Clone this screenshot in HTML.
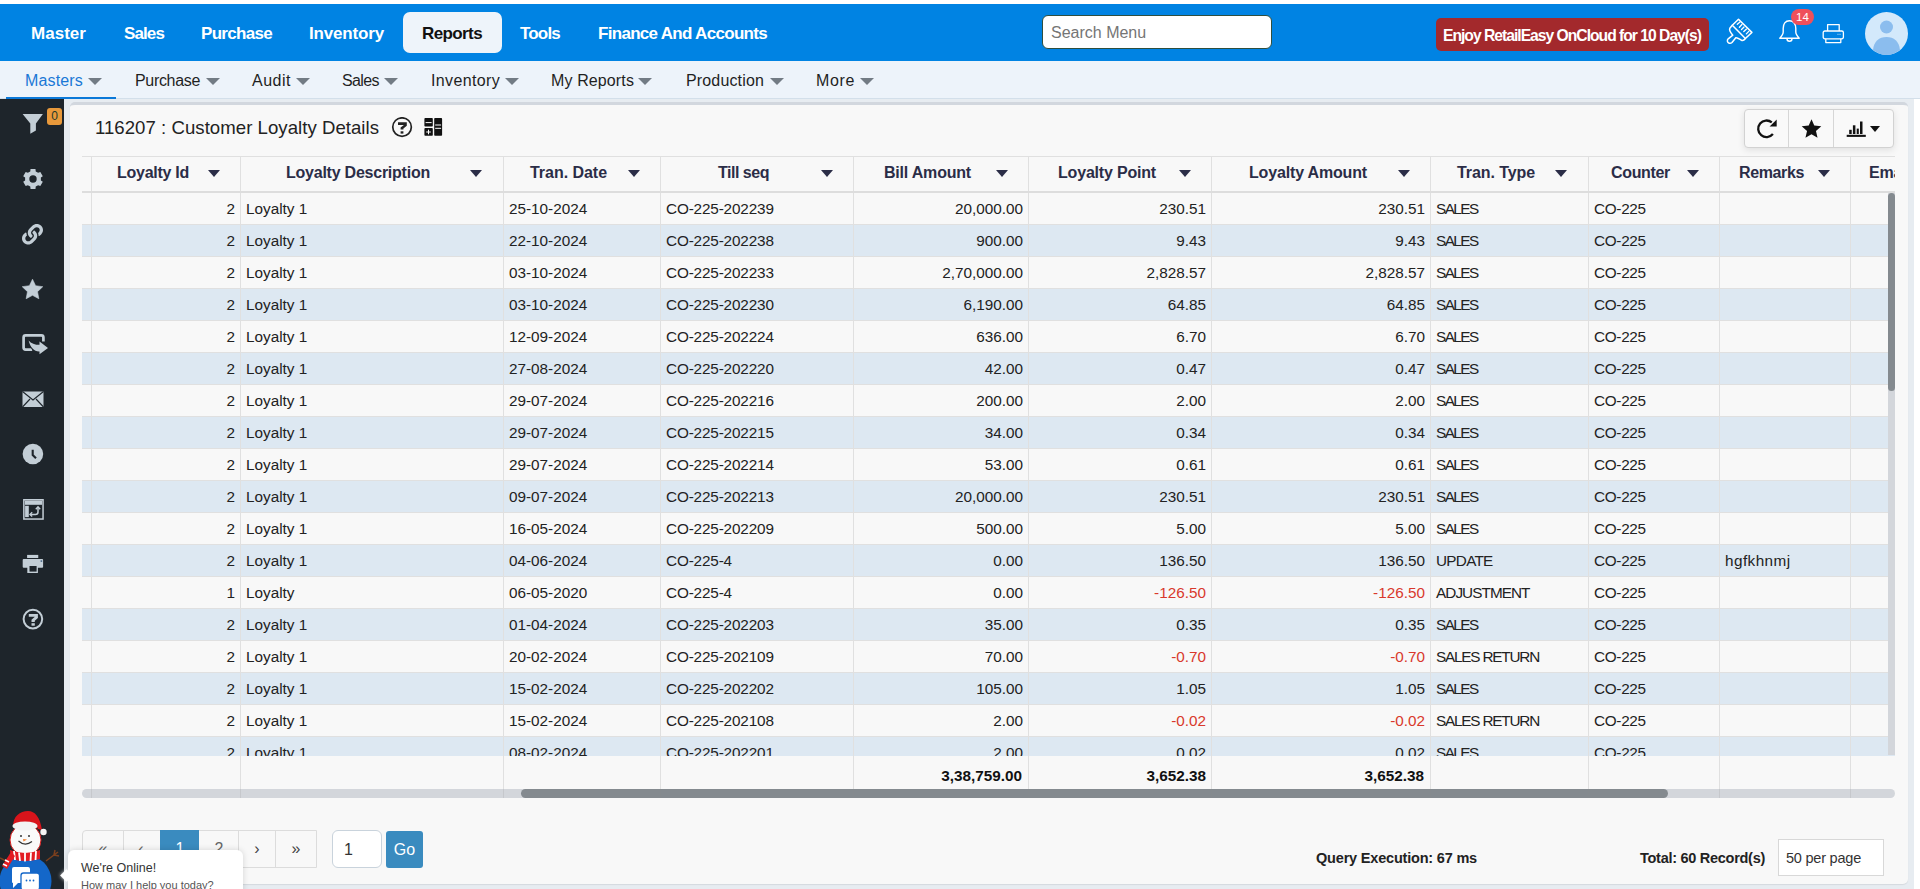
<!DOCTYPE html><html><head><meta charset="utf-8"><style>
*{box-sizing:border-box;margin:0;padding:0}
html,body{width:1920px;height:889px;overflow:hidden;background:#fff;font-family:"Liberation Sans", sans-serif;}
.abs{position:absolute}
.tn{position:absolute;top:1px;height:57px;line-height:57px;color:#fff;font-weight:bold;font-size:17px;white-space:nowrap}
.sn{position:absolute;top:0;height:37px;line-height:39px;color:#1f1f1f;font-size:16px;white-space:nowrap}
.hd{position:absolute;top:0;height:35px;line-height:34px;font-weight:bold;font-size:16px;color:#2b2d47;white-space:nowrap}
.c{position:absolute;top:0;height:32px;line-height:31px;font-size:15.3px;color:#222;white-space:nowrap}
.neg{color:#d9382c}
</style></head><body>

<div class="abs" style="left:0;top:4px;width:1920px;height:57px;background:#0083e3">
<div class="abs" style="left:403px;top:8px;width:99px;height:41px;background:#eef4fa;border-radius:7px"></div>
<div class="tn" style="letter-spacing:0.031px;left:31px;color:#fff">Master</div>
<div class="tn" style="letter-spacing:-0.887px;left:124px;color:#fff">Sales</div>
<div class="tn" style="letter-spacing:-0.693px;left:201px;color:#fff">Purchase</div>
<div class="tn" style="letter-spacing:-0.170px;left:309px;color:#fff">Inventory</div>
<div class="tn" style="letter-spacing:-0.605px;left:422px;color:#111">Reports</div>
<div class="tn" style="letter-spacing:-0.816px;left:520px;color:#fff">Tools</div>
<div class="tn" style="letter-spacing:-0.697px;left:598px;color:#fff">Finance And Accounts</div>
<div class="abs" style="left:1042px;top:11px;width:230px;height:34px;background:#fff;border:1px solid #2f4f3f;border-radius:6px;font-size:16px;color:#757575;line-height:34px;padding-left:8px">Search Menu</div>
<div class="abs" style="left:1436px;top:14px;width:273px;height:33px;background:#a3292c;border-radius:5px"></div>
<div class="tn" style="letter-spacing:-1.011px;left:1443px;top:14px;height:33px;line-height:35px;font-size:15.7px">Enjoy RetailEasy OnCloud for 10 Day(s)</div>
<svg class="abs" style="left:1722px;top:10px" width="36" height="34" viewBox="0 0 36 34" fill="none" stroke="#fff" stroke-width="1.5" stroke-linejoin="round" stroke-linecap="round">
<path d="M16.5 5.2 L29.9 18.4 L23.4 24.5 L10.3 11.3 Z"/>
<path d="M10.3 11.3 L7.8 14.3 C7.2 15.5 8.5 18.5 10.8 21.2 L6.2 24.8 C4.8 26.2 5.2 28.6 7.2 29.2 C8.2 29.5 9.2 29.2 10 28.5 L13.8 23.7 C15.5 23.2 18 25.5 20 26.5 C21.5 26.8 22.6 25.6 23.4 24.5"/>
<path d="M15.3 10.3 L18 8 M17.4 13.2 L19.9 10.5 M19.5 15.5 L22 13 M21.8 17.6 L24.5 15.1 M24.3 19.9 L26.8 17.4" stroke-width="1.3"/></svg>
<svg class="abs" style="left:1778px;top:15px" width="24" height="26" viewBox="0 0 24 26" fill="none" stroke="#fff" stroke-width="1.4" stroke-linejoin="round">
<path d="M11.5 1.8 C7.3 1.8 5.2 5 5.2 9.5 L5.2 13 C5.2 15 4.4 16.3 1.8 19.3 L21.2 19.3 C18.6 16.3 17.8 15 17.8 13 L17.8 9.5 C17.8 5 15.7 1.8 11.5 1.8 Z"/><path d="M9 19.8 a2.5 2.5 0 0 0 5 0"/></svg>
<div class="abs" style="left:1791px;top:5px;width:23px;height:16px;background:#ef505b;border-radius:8px;color:#fff;font-size:11.5px;line-height:17px;text-align:center">14</div>
<svg class="abs" style="left:1822px;top:18px" width="23" height="22" viewBox="0 0 23 22" fill="none" stroke="#fff" stroke-width="1.3" stroke-linejoin="round">
<path d="M5.6 9 V2.6 H17.2 V9"/><path d="M3.8 16.8 H2.8 a1.6 1.6 0 0 1 -1.6 -1.6 V10.6 a1.6 1.6 0 0 1 1.6 -1.6 H19.8 a1.6 1.6 0 0 1 1.6 1.6 V15.2 a1.6 1.6 0 0 1 -1.6 1.6 H18.8"/><rect x="3.8" y="16.8" width="15" height="3.8"/><path d="M15.6 12.3 H16.4 M17.6 12.3 H18.4" stroke-width="1"/></svg>
<svg class="abs" style="left:1865px;top:8px" width="43" height="43" viewBox="0 0 43 43"><circle cx="21.5" cy="21.5" r="21.5" fill="#d3e9fb"/><circle cx="21.5" cy="15" r="6.5" fill="#8bbdee"/><path d="M8 38 C9 29 14 25 21.5 25 C29 25 34 29 35 38 C31 41 26 43 21.5 43 C17 43 12 41 8 38 Z" fill="#8bbdee"/></svg>
</div>
<div class="abs" style="left:0;top:61px;width:1920px;height:38px;background:#edf3fa;border-bottom:1px solid #d3dfea">
<div class="sn" style="letter-spacing:0.156px;left:25px;color:#1a78d6">Masters</div>
<div style="position:absolute;left:88px;top:17px;width:0;height:0;border-left:7.0px solid transparent;border-right:7.0px solid transparent;border-top:7px solid #727b84"></div>
<div class="sn" style="letter-spacing:-0.324px;left:135px;color:#1f1f1f">Purchase</div>
<div style="position:absolute;left:206px;top:17px;width:0;height:0;border-left:7.0px solid transparent;border-right:7.0px solid transparent;border-top:7px solid #727b84"></div>
<div class="sn" style="letter-spacing:0.506px;left:252px;color:#1f1f1f">Audit</div>
<div style="position:absolute;left:296px;top:17px;width:0;height:0;border-left:7.0px solid transparent;border-right:7.0px solid transparent;border-top:7px solid #727b84"></div>
<div class="sn" style="letter-spacing:-0.606px;left:342px;color:#1f1f1f">Sales</div>
<div style="position:absolute;left:384px;top:17px;width:0;height:0;border-left:7.0px solid transparent;border-right:7.0px solid transparent;border-top:7px solid #727b84"></div>
<div class="sn" style="letter-spacing:0.354px;left:431px;color:#1f1f1f">Inventory</div>
<div style="position:absolute;left:505px;top:17px;width:0;height:0;border-left:7.0px solid transparent;border-right:7.0px solid transparent;border-top:7px solid #727b84"></div>
<div class="sn" style="letter-spacing:0.120px;left:551px;color:#1f1f1f">My Reports</div>
<div style="position:absolute;left:638px;top:17px;width:0;height:0;border-left:7.0px solid transparent;border-right:7.0px solid transparent;border-top:7px solid #727b84"></div>
<div class="sn" style="letter-spacing:0.150px;left:686px;color:#1f1f1f">Production</div>
<div style="position:absolute;left:770px;top:17px;width:0;height:0;border-left:7.0px solid transparent;border-right:7.0px solid transparent;border-top:7px solid #727b84"></div>
<div class="sn" style="letter-spacing:0.637px;left:816px;color:#1f1f1f">More</div>
<div style="position:absolute;left:860px;top:17px;width:0;height:0;border-left:7.0px solid transparent;border-right:7.0px solid transparent;border-top:7px solid #727b84"></div>
<div class="abs" style="left:6px;top:36px;width:110px;height:2px;background:#0a78d8"></div>
</div>
<div class="abs" style="left:0;top:99px;width:64px;height:790px;background:#1e252b"></div>
<div class="abs" style="left:64px;top:99px;width:1850px;height:790px;background:#e7ecf1"></div>
<div class="abs" style="left:1914px;top:99px;width:6px;height:790px;background:#fff"></div>
<div class="abs" style="left:70px;top:102px;width:1838px;height:782px;background:#f8f8f8;border-top:3px solid #d2d7de;border-radius:5px;box-shadow:0 1px 1px rgba(0,0,0,0.08)"></div>
<div class="abs" style="letter-spacing:0.035px;left:95px;top:113px;height:30px;line-height:30px;font-size:18.6px;color:#222;white-space:nowrap">116207 : Customer Loyalty Details</div>
<svg class="abs" style="left:391px;top:117px" width="22" height="21" viewBox="0 0 22 21"><circle cx="11.05" cy="10.1" r="9.3" fill="none" stroke="#222" stroke-width="1.7"/><path d="M7 5.2 H15.8 V8.8 L12.4 11.6 V12.6 H9.6 V10.6 L12.9 7.9 H7 Z" fill="#222"/><rect x="9.6" y="14.3" width="2.8" height="2.3" fill="#222"/></svg>
<svg class="abs" style="left:424px;top:118px" width="19" height="18" viewBox="0 0 19 18"><rect x="0.4" y="0.1" width="8.4" height="8.4" rx="0.8" fill="#111"/><rect x="0.4" y="10.1" width="8.4" height="7.7" rx="0.8" fill="#111"/><rect x="10.2" y="0.1" width="7.9" height="17.7" rx="0.8" fill="#111"/><path d="M1.6 4.6 H7.6 M11.2 7 H17.1 M11.2 10.3 H17.1 M2.2 14 H6.8 M4.5 11.7 V16.3" stroke="#fff" stroke-width="1"/></svg>
<div class="abs" style="left:1744px;top:109px;width:150px;height:39px;background:#f9f9f9;border:1.5px solid #d2d2d2;border-radius:4px;box-shadow:0 2px 7px rgba(0,0,0,0.10)"></div>
<div class="abs" style="left:1788px;top:110px;width:1px;height:37px;background:#d6d6d6"></div>
<div class="abs" style="left:1833px;top:110px;width:1px;height:37px;background:#d6d6d6"></div>
<svg class="abs" style="left:1756px;top:118px" width="22" height="22" viewBox="0 0 22 22"><path d="M16.9 16.1 A8.3 8.3 0 1 1 15.8 4.4" fill="none" stroke="#111" stroke-width="2.3"/><path d="M20.7 1.4 L20.7 8.5 L13.6 8.5 Z" fill="#111"/></svg>
<svg class="abs" style="left:1801px;top:119px" width="21" height="20" viewBox="0 0 21 21"><path d="M10.50 0.20 L13.40 6.90 L20.77 7.66 L15.20 12.64 L16.85 19.74 L10.50 15.90 L4.15 19.74 L5.80 12.64 L0.23 7.66 L7.60 6.90 Z" fill="#111"/></svg>
<svg class="abs" style="left:1846px;top:120px" width="20" height="18" viewBox="0 0 20 18"><rect x="0.7" y="14.8" width="19.1" height="2.1" fill="#111"/><rect x="3.2" y="9.8" width="2.5" height="4.2" fill="#111"/><rect x="6.9" y="5.3" width="2.5" height="8.7" fill="#111"/><rect x="10.7" y="8.6" width="2.1" height="5.4" fill="#111"/><rect x="14" y="1.5" width="2.5" height="12.5" fill="#111"/></svg>
<div style="position:absolute;left:1870px;top:126px;width:0;height:0;border-left:5.5px solid transparent;border-right:5.5px solid transparent;border-top:6px solid #111"></div>
<div class="abs" style="left:82px;top:156px;width:1813px;height:643px;overflow:hidden">
<div class="abs" style="left:0;top:0;width:2000px;height:37px;border-top:1px solid #e0e0e0;border-bottom:2px solid #dddddd"></div>
<div class="abs" style="left:9px;top:1px;width:1px;height:34px;background:#e0e0e0"></div>
<div class="hd" style="letter-spacing:-0.269px;left:35px">Loyalty Id</div>
<div style="position:absolute;left:126px;top:13.5px;width:0;height:0;border-left:6.0px solid transparent;border-right:6.0px solid transparent;border-top:7px solid #2b2d47"></div>
<div class="abs" style="left:158px;top:1px;width:1px;height:34px;background:#e0e0e0"></div>
<div class="hd" style="letter-spacing:-0.236px;left:204px">Loyalty Description</div>
<div style="position:absolute;left:388px;top:13.5px;width:0;height:0;border-left:6.0px solid transparent;border-right:6.0px solid transparent;border-top:7px solid #2b2d47"></div>
<div class="abs" style="left:421px;top:1px;width:1px;height:34px;background:#e0e0e0"></div>
<div class="hd" style="letter-spacing:-0.036px;left:448px">Tran. Date</div>
<div style="position:absolute;left:546px;top:13.5px;width:0;height:0;border-left:6.0px solid transparent;border-right:6.0px solid transparent;border-top:7px solid #2b2d47"></div>
<div class="abs" style="left:578px;top:1px;width:1px;height:34px;background:#e0e0e0"></div>
<div class="hd" style="letter-spacing:-0.480px;left:636px">Till seq</div>
<div style="position:absolute;left:739px;top:13.5px;width:0;height:0;border-left:6.0px solid transparent;border-right:6.0px solid transparent;border-top:7px solid #2b2d47"></div>
<div class="abs" style="left:771px;top:1px;width:1px;height:34px;background:#e0e0e0"></div>
<div class="hd" style="letter-spacing:-0.197px;left:802px">Bill Amount</div>
<div style="position:absolute;left:914px;top:13.5px;width:0;height:0;border-left:6.0px solid transparent;border-right:6.0px solid transparent;border-top:7px solid #2b2d47"></div>
<div class="abs" style="left:946px;top:1px;width:1px;height:34px;background:#e0e0e0"></div>
<div class="hd" style="letter-spacing:-0.189px;left:976px">Loyalty Point</div>
<div style="position:absolute;left:1097px;top:13.5px;width:0;height:0;border-left:6.0px solid transparent;border-right:6.0px solid transparent;border-top:7px solid #2b2d47"></div>
<div class="abs" style="left:1129px;top:1px;width:1px;height:34px;background:#e0e0e0"></div>
<div class="hd" style="letter-spacing:-0.164px;left:1167px">Loyalty Amount</div>
<div style="position:absolute;left:1316px;top:13.5px;width:0;height:0;border-left:6.0px solid transparent;border-right:6.0px solid transparent;border-top:7px solid #2b2d47"></div>
<div class="abs" style="left:1348px;top:1px;width:1px;height:34px;background:#e0e0e0"></div>
<div class="hd" style="letter-spacing:-0.084px;left:1375px">Tran. Type</div>
<div style="position:absolute;left:1473px;top:13.5px;width:0;height:0;border-left:6.0px solid transparent;border-right:6.0px solid transparent;border-top:7px solid #2b2d47"></div>
<div class="abs" style="left:1506px;top:1px;width:1px;height:34px;background:#e0e0e0"></div>
<div class="hd" style="letter-spacing:-0.333px;left:1529px">Counter</div>
<div style="position:absolute;left:1605px;top:13.5px;width:0;height:0;border-left:6.0px solid transparent;border-right:6.0px solid transparent;border-top:7px solid #2b2d47"></div>
<div class="abs" style="left:1637px;top:1px;width:1px;height:34px;background:#e0e0e0"></div>
<div class="hd" style="letter-spacing:-0.373px;left:1657px">Remarks</div>
<div style="position:absolute;left:1736px;top:13.5px;width:0;height:0;border-left:6.0px solid transparent;border-right:6.0px solid transparent;border-top:7px solid #2b2d47"></div>
<div class="abs" style="left:1768px;top:1px;width:1px;height:34px;background:#e0e0e0"></div>
<div class="hd" style="left:1787px;letter-spacing:-0.2px">Email</div>
<div style="position:absolute;left:1908px;top:13.5px;width:0;height:0;border-left:6.0px solid transparent;border-right:6.0px solid transparent;border-top:7px solid #2b2d47"></div>
<div class="abs" style="left:0;top:37px;width:1813px;height:563px;overflow:hidden">
<div class="abs" style="left:0;top:0px;width:1813px;height:32px;background:#f8f8f8;border-bottom:1px solid #e0e0e0">
</div>
<div class="abs" style="left:0;top:32px;width:1813px;height:32px;background:#dde8f2;border-bottom:1px solid #e0e0e0">
</div>
<div class="abs" style="left:0;top:64px;width:1813px;height:32px;background:#f8f8f8;border-bottom:1px solid #e0e0e0">
</div>
<div class="abs" style="left:0;top:96px;width:1813px;height:32px;background:#dde8f2;border-bottom:1px solid #e0e0e0">
</div>
<div class="abs" style="left:0;top:128px;width:1813px;height:32px;background:#f8f8f8;border-bottom:1px solid #e0e0e0">
</div>
<div class="abs" style="left:0;top:160px;width:1813px;height:32px;background:#dde8f2;border-bottom:1px solid #e0e0e0">
</div>
<div class="abs" style="left:0;top:192px;width:1813px;height:32px;background:#f8f8f8;border-bottom:1px solid #e0e0e0">
</div>
<div class="abs" style="left:0;top:224px;width:1813px;height:32px;background:#dde8f2;border-bottom:1px solid #e0e0e0">
</div>
<div class="abs" style="left:0;top:256px;width:1813px;height:32px;background:#f8f8f8;border-bottom:1px solid #e0e0e0">
</div>
<div class="abs" style="left:0;top:288px;width:1813px;height:32px;background:#dde8f2;border-bottom:1px solid #e0e0e0">
</div>
<div class="abs" style="left:0;top:320px;width:1813px;height:32px;background:#f8f8f8;border-bottom:1px solid #e0e0e0">
</div>
<div class="abs" style="left:0;top:352px;width:1813px;height:32px;background:#dde8f2;border-bottom:1px solid #e0e0e0">
</div>
<div class="abs" style="left:0;top:384px;width:1813px;height:32px;background:#f8f8f8;border-bottom:1px solid #e0e0e0">
</div>
<div class="abs" style="left:0;top:416px;width:1813px;height:32px;background:#dde8f2;border-bottom:1px solid #e0e0e0">
</div>
<div class="abs" style="left:0;top:448px;width:1813px;height:32px;background:#f8f8f8;border-bottom:1px solid #e0e0e0">
</div>
<div class="abs" style="left:0;top:480px;width:1813px;height:32px;background:#dde8f2;border-bottom:1px solid #e0e0e0">
</div>
<div class="abs" style="left:0;top:512px;width:1813px;height:32px;background:#f8f8f8;border-bottom:1px solid #e0e0e0">
</div>
<div class="abs" style="left:0;top:544px;width:1813px;height:32px;background:#dde8f2;border-bottom:1px solid #e0e0e0">
</div>
</div>
<div class="abs" style="left:9px;top:37px;width:1px;height:605px;background:#e0e0e0"></div>
<div class="abs" style="left:158px;top:37px;width:1px;height:605px;background:#e0e0e0"></div>
<div class="abs" style="left:421px;top:37px;width:1px;height:605px;background:#e0e0e0"></div>
<div class="abs" style="left:578px;top:37px;width:1px;height:605px;background:#e0e0e0"></div>
<div class="abs" style="left:771px;top:37px;width:1px;height:605px;background:#e0e0e0"></div>
<div class="abs" style="left:946px;top:37px;width:1px;height:605px;background:#e0e0e0"></div>
<div class="abs" style="left:1129px;top:37px;width:1px;height:605px;background:#e0e0e0"></div>
<div class="abs" style="left:1348px;top:37px;width:1px;height:605px;background:#e0e0e0"></div>
<div class="abs" style="left:1506px;top:37px;width:1px;height:605px;background:#e0e0e0"></div>
<div class="abs" style="left:1637px;top:37px;width:1px;height:605px;background:#e0e0e0"></div>
<div class="abs" style="left:1768px;top:37px;width:1px;height:605px;background:#e0e0e0"></div>
<div class="abs" style="left:0;top:37px;width:1813px;height:563px;overflow:hidden">
<div class="c" style="left:9px;top:0px;width:144px;text-align:right">2</div>
<div class="c" style="left:164px;top:0px">Loyalty 1</div>
<div class="c" style="left:427px;top:0px">25-10-2024</div>
<div class="c" style="left:584px;top:0px;letter-spacing:-0.15px">CO-225-202239</div>
<div class="c" style="left:771px;top:0px;width:170px;text-align:right">20,000.00</div>
<div class="c" style="left:946px;top:0px;width:178px;text-align:right">230.51</div>
<div class="c" style="left:1129px;top:0px;width:214px;text-align:right">230.51</div>
<div class="c" style="letter-spacing:-1.526px;left:1354px;top:0px">SALES</div>
<div class="c" style="left:1512px;top:0px;letter-spacing:-0.3px">CO-225</div>
<div class="c" style="left:9px;top:32px;width:144px;text-align:right">2</div>
<div class="c" style="left:164px;top:32px">Loyalty 1</div>
<div class="c" style="left:427px;top:32px">22-10-2024</div>
<div class="c" style="left:584px;top:32px;letter-spacing:-0.15px">CO-225-202238</div>
<div class="c" style="left:771px;top:32px;width:170px;text-align:right">900.00</div>
<div class="c" style="left:946px;top:32px;width:178px;text-align:right">9.43</div>
<div class="c" style="left:1129px;top:32px;width:214px;text-align:right">9.43</div>
<div class="c" style="letter-spacing:-1.526px;left:1354px;top:32px">SALES</div>
<div class="c" style="left:1512px;top:32px;letter-spacing:-0.3px">CO-225</div>
<div class="c" style="left:9px;top:64px;width:144px;text-align:right">2</div>
<div class="c" style="left:164px;top:64px">Loyalty 1</div>
<div class="c" style="left:427px;top:64px">03-10-2024</div>
<div class="c" style="left:584px;top:64px;letter-spacing:-0.15px">CO-225-202233</div>
<div class="c" style="left:771px;top:64px;width:170px;text-align:right">2,70,000.00</div>
<div class="c" style="left:946px;top:64px;width:178px;text-align:right">2,828.57</div>
<div class="c" style="left:1129px;top:64px;width:214px;text-align:right">2,828.57</div>
<div class="c" style="letter-spacing:-1.526px;left:1354px;top:64px">SALES</div>
<div class="c" style="left:1512px;top:64px;letter-spacing:-0.3px">CO-225</div>
<div class="c" style="left:9px;top:96px;width:144px;text-align:right">2</div>
<div class="c" style="left:164px;top:96px">Loyalty 1</div>
<div class="c" style="left:427px;top:96px">03-10-2024</div>
<div class="c" style="left:584px;top:96px;letter-spacing:-0.15px">CO-225-202230</div>
<div class="c" style="left:771px;top:96px;width:170px;text-align:right">6,190.00</div>
<div class="c" style="left:946px;top:96px;width:178px;text-align:right">64.85</div>
<div class="c" style="left:1129px;top:96px;width:214px;text-align:right">64.85</div>
<div class="c" style="letter-spacing:-1.526px;left:1354px;top:96px">SALES</div>
<div class="c" style="left:1512px;top:96px;letter-spacing:-0.3px">CO-225</div>
<div class="c" style="left:9px;top:128px;width:144px;text-align:right">2</div>
<div class="c" style="left:164px;top:128px">Loyalty 1</div>
<div class="c" style="left:427px;top:128px">12-09-2024</div>
<div class="c" style="left:584px;top:128px;letter-spacing:-0.15px">CO-225-202224</div>
<div class="c" style="left:771px;top:128px;width:170px;text-align:right">636.00</div>
<div class="c" style="left:946px;top:128px;width:178px;text-align:right">6.70</div>
<div class="c" style="left:1129px;top:128px;width:214px;text-align:right">6.70</div>
<div class="c" style="letter-spacing:-1.526px;left:1354px;top:128px">SALES</div>
<div class="c" style="left:1512px;top:128px;letter-spacing:-0.3px">CO-225</div>
<div class="c" style="left:9px;top:160px;width:144px;text-align:right">2</div>
<div class="c" style="left:164px;top:160px">Loyalty 1</div>
<div class="c" style="left:427px;top:160px">27-08-2024</div>
<div class="c" style="left:584px;top:160px;letter-spacing:-0.15px">CO-225-202220</div>
<div class="c" style="left:771px;top:160px;width:170px;text-align:right">42.00</div>
<div class="c" style="left:946px;top:160px;width:178px;text-align:right">0.47</div>
<div class="c" style="left:1129px;top:160px;width:214px;text-align:right">0.47</div>
<div class="c" style="letter-spacing:-1.526px;left:1354px;top:160px">SALES</div>
<div class="c" style="left:1512px;top:160px;letter-spacing:-0.3px">CO-225</div>
<div class="c" style="left:9px;top:192px;width:144px;text-align:right">2</div>
<div class="c" style="left:164px;top:192px">Loyalty 1</div>
<div class="c" style="left:427px;top:192px">29-07-2024</div>
<div class="c" style="left:584px;top:192px;letter-spacing:-0.15px">CO-225-202216</div>
<div class="c" style="left:771px;top:192px;width:170px;text-align:right">200.00</div>
<div class="c" style="left:946px;top:192px;width:178px;text-align:right">2.00</div>
<div class="c" style="left:1129px;top:192px;width:214px;text-align:right">2.00</div>
<div class="c" style="letter-spacing:-1.526px;left:1354px;top:192px">SALES</div>
<div class="c" style="left:1512px;top:192px;letter-spacing:-0.3px">CO-225</div>
<div class="c" style="left:9px;top:224px;width:144px;text-align:right">2</div>
<div class="c" style="left:164px;top:224px">Loyalty 1</div>
<div class="c" style="left:427px;top:224px">29-07-2024</div>
<div class="c" style="left:584px;top:224px;letter-spacing:-0.15px">CO-225-202215</div>
<div class="c" style="left:771px;top:224px;width:170px;text-align:right">34.00</div>
<div class="c" style="left:946px;top:224px;width:178px;text-align:right">0.34</div>
<div class="c" style="left:1129px;top:224px;width:214px;text-align:right">0.34</div>
<div class="c" style="letter-spacing:-1.526px;left:1354px;top:224px">SALES</div>
<div class="c" style="left:1512px;top:224px;letter-spacing:-0.3px">CO-225</div>
<div class="c" style="left:9px;top:256px;width:144px;text-align:right">2</div>
<div class="c" style="left:164px;top:256px">Loyalty 1</div>
<div class="c" style="left:427px;top:256px">29-07-2024</div>
<div class="c" style="left:584px;top:256px;letter-spacing:-0.15px">CO-225-202214</div>
<div class="c" style="left:771px;top:256px;width:170px;text-align:right">53.00</div>
<div class="c" style="left:946px;top:256px;width:178px;text-align:right">0.61</div>
<div class="c" style="left:1129px;top:256px;width:214px;text-align:right">0.61</div>
<div class="c" style="letter-spacing:-1.526px;left:1354px;top:256px">SALES</div>
<div class="c" style="left:1512px;top:256px;letter-spacing:-0.3px">CO-225</div>
<div class="c" style="left:9px;top:288px;width:144px;text-align:right">2</div>
<div class="c" style="left:164px;top:288px">Loyalty 1</div>
<div class="c" style="left:427px;top:288px">09-07-2024</div>
<div class="c" style="left:584px;top:288px;letter-spacing:-0.15px">CO-225-202213</div>
<div class="c" style="left:771px;top:288px;width:170px;text-align:right">20,000.00</div>
<div class="c" style="left:946px;top:288px;width:178px;text-align:right">230.51</div>
<div class="c" style="left:1129px;top:288px;width:214px;text-align:right">230.51</div>
<div class="c" style="letter-spacing:-1.526px;left:1354px;top:288px">SALES</div>
<div class="c" style="left:1512px;top:288px;letter-spacing:-0.3px">CO-225</div>
<div class="c" style="left:9px;top:320px;width:144px;text-align:right">2</div>
<div class="c" style="left:164px;top:320px">Loyalty 1</div>
<div class="c" style="left:427px;top:320px">16-05-2024</div>
<div class="c" style="left:584px;top:320px;letter-spacing:-0.15px">CO-225-202209</div>
<div class="c" style="left:771px;top:320px;width:170px;text-align:right">500.00</div>
<div class="c" style="left:946px;top:320px;width:178px;text-align:right">5.00</div>
<div class="c" style="left:1129px;top:320px;width:214px;text-align:right">5.00</div>
<div class="c" style="letter-spacing:-1.526px;left:1354px;top:320px">SALES</div>
<div class="c" style="left:1512px;top:320px;letter-spacing:-0.3px">CO-225</div>
<div class="c" style="left:9px;top:352px;width:144px;text-align:right">2</div>
<div class="c" style="left:164px;top:352px">Loyalty 1</div>
<div class="c" style="left:427px;top:352px">04-06-2024</div>
<div class="c" style="left:584px;top:352px;letter-spacing:-0.15px">CO-225-4</div>
<div class="c" style="left:771px;top:352px;width:170px;text-align:right">0.00</div>
<div class="c" style="left:946px;top:352px;width:178px;text-align:right">136.50</div>
<div class="c" style="left:1129px;top:352px;width:214px;text-align:right">136.50</div>
<div class="c" style="letter-spacing:-0.720px;left:1354px;top:352px">UPDATE</div>
<div class="c" style="left:1512px;top:352px;letter-spacing:-0.3px">CO-225</div>
<div class="c" style="letter-spacing:0.440px;left:1643px;top:352px">hgfkhnmj</div>
<div class="c" style="left:9px;top:384px;width:144px;text-align:right">1</div>
<div class="c" style="left:164px;top:384px">Loyalty</div>
<div class="c" style="left:427px;top:384px">06-05-2020</div>
<div class="c" style="left:584px;top:384px;letter-spacing:-0.15px">CO-225-4</div>
<div class="c" style="left:771px;top:384px;width:170px;text-align:right">0.00</div>
<div class="c neg" style="left:946px;top:384px;width:178px;text-align:right">-126.50</div>
<div class="c neg" style="left:1129px;top:384px;width:214px;text-align:right">-126.50</div>
<div class="c" style="letter-spacing:-0.934px;left:1354px;top:384px">ADJUSTMENT</div>
<div class="c" style="left:1512px;top:384px;letter-spacing:-0.3px">CO-225</div>
<div class="c" style="left:9px;top:416px;width:144px;text-align:right">2</div>
<div class="c" style="left:164px;top:416px">Loyalty 1</div>
<div class="c" style="left:427px;top:416px">01-04-2024</div>
<div class="c" style="left:584px;top:416px;letter-spacing:-0.15px">CO-225-202203</div>
<div class="c" style="left:771px;top:416px;width:170px;text-align:right">35.00</div>
<div class="c" style="left:946px;top:416px;width:178px;text-align:right">0.35</div>
<div class="c" style="left:1129px;top:416px;width:214px;text-align:right">0.35</div>
<div class="c" style="letter-spacing:-1.526px;left:1354px;top:416px">SALES</div>
<div class="c" style="left:1512px;top:416px;letter-spacing:-0.3px">CO-225</div>
<div class="c" style="left:9px;top:448px;width:144px;text-align:right">2</div>
<div class="c" style="left:164px;top:448px">Loyalty 1</div>
<div class="c" style="left:427px;top:448px">20-02-2024</div>
<div class="c" style="left:584px;top:448px;letter-spacing:-0.15px">CO-225-202109</div>
<div class="c" style="left:771px;top:448px;width:170px;text-align:right">70.00</div>
<div class="c neg" style="left:946px;top:448px;width:178px;text-align:right">-0.70</div>
<div class="c neg" style="left:1129px;top:448px;width:214px;text-align:right">-0.70</div>
<div class="c" style="letter-spacing:-1.193px;left:1354px;top:448px">SALES RETURN</div>
<div class="c" style="left:1512px;top:448px;letter-spacing:-0.3px">CO-225</div>
<div class="c" style="left:9px;top:480px;width:144px;text-align:right">2</div>
<div class="c" style="left:164px;top:480px">Loyalty 1</div>
<div class="c" style="left:427px;top:480px">15-02-2024</div>
<div class="c" style="left:584px;top:480px;letter-spacing:-0.15px">CO-225-202202</div>
<div class="c" style="left:771px;top:480px;width:170px;text-align:right">105.00</div>
<div class="c" style="left:946px;top:480px;width:178px;text-align:right">1.05</div>
<div class="c" style="left:1129px;top:480px;width:214px;text-align:right">1.05</div>
<div class="c" style="letter-spacing:-1.526px;left:1354px;top:480px">SALES</div>
<div class="c" style="left:1512px;top:480px;letter-spacing:-0.3px">CO-225</div>
<div class="c" style="left:9px;top:512px;width:144px;text-align:right">2</div>
<div class="c" style="left:164px;top:512px">Loyalty 1</div>
<div class="c" style="left:427px;top:512px">15-02-2024</div>
<div class="c" style="left:584px;top:512px;letter-spacing:-0.15px">CO-225-202108</div>
<div class="c" style="left:771px;top:512px;width:170px;text-align:right">2.00</div>
<div class="c neg" style="left:946px;top:512px;width:178px;text-align:right">-0.02</div>
<div class="c neg" style="left:1129px;top:512px;width:214px;text-align:right">-0.02</div>
<div class="c" style="letter-spacing:-1.193px;left:1354px;top:512px">SALES RETURN</div>
<div class="c" style="left:1512px;top:512px;letter-spacing:-0.3px">CO-225</div>
<div class="c" style="left:9px;top:544px;width:144px;text-align:right">2</div>
<div class="c" style="left:164px;top:544px">Loyalty 1</div>
<div class="c" style="left:427px;top:544px">08-02-2024</div>
<div class="c" style="left:584px;top:544px;letter-spacing:-0.15px">CO-225-202201</div>
<div class="c" style="left:771px;top:544px;width:170px;text-align:right">2.00</div>
<div class="c" style="left:946px;top:544px;width:178px;text-align:right">0.02</div>
<div class="c" style="left:1129px;top:544px;width:214px;text-align:right">0.02</div>
<div class="c" style="letter-spacing:-1.526px;left:1354px;top:544px">SALES</div>
<div class="c" style="left:1512px;top:544px;letter-spacing:-0.3px">CO-225</div>
</div>
<div class="c" style="left:0;top:604px;width:940px;text-align:right;font-weight:bold;color:#111">3,38,759.00</div>
<div class="c" style="left:0;top:604px;width:1124px;text-align:right;font-weight:bold;color:#111">3,652.38</div>
<div class="c" style="left:0;top:604px;width:1342px;text-align:right;font-weight:bold;color:#111">3,652.38</div>
<div class="abs" style="left:0;top:633px;width:1813px;height:9px;background:#d3d6db;border-radius:5px"></div>
<div class="abs" style="left:439px;top:633px;width:1147px;height:9px;background:#848a8f;border-radius:5px"></div>
<div class="abs" style="left:9px;top:633px;width:1px;height:9px;background:rgba(140,140,140,0.18)"></div>
<div class="abs" style="left:158px;top:633px;width:1px;height:9px;background:rgba(140,140,140,0.18)"></div>
<div class="abs" style="left:421px;top:633px;width:1px;height:9px;background:rgba(140,140,140,0.18)"></div>
<div class="abs" style="left:578px;top:633px;width:1px;height:9px;background:rgba(140,140,140,0.18)"></div>
<div class="abs" style="left:771px;top:633px;width:1px;height:9px;background:rgba(140,140,140,0.18)"></div>
<div class="abs" style="left:946px;top:633px;width:1px;height:9px;background:rgba(140,140,140,0.18)"></div>
<div class="abs" style="left:1129px;top:633px;width:1px;height:9px;background:rgba(140,140,140,0.18)"></div>
<div class="abs" style="left:1348px;top:633px;width:1px;height:9px;background:rgba(140,140,140,0.18)"></div>
<div class="abs" style="left:1506px;top:633px;width:1px;height:9px;background:rgba(140,140,140,0.18)"></div>
<div class="abs" style="left:1637px;top:633px;width:1px;height:9px;background:rgba(140,140,140,0.18)"></div>
<div class="abs" style="left:1768px;top:633px;width:1px;height:9px;background:rgba(140,140,140,0.18)"></div>
<div class="abs" style="left:1806px;top:37px;width:7px;height:562px;background:#d3d6db"></div>
<div class="abs" style="left:1806px;top:37px;width:7px;height:198px;background:#848a8f;border-radius:4px"></div>
</div>
<svg class="abs" style="left:22px;top:114px" width="21" height="20" viewBox="0 0 21 20"><path d="M0.6 0 H20.9 L13.9 9.6 V16.4 L8.3 19.8 V9.6 Z" fill="#c3ced6"/></svg>
<div class="abs" style="left:47px;top:108px;width:15px;height:17px;background:#e8993b;border-radius:3px;color:#1e3a2b;font-size:12px;line-height:17px;text-align:center">0</div>
<svg class="abs" style="left:23px;top:169px" width="20" height="20" viewBox="0 0 20 20"><path fill="#c3ced6" fill-rule="evenodd" d="M7.26 2.48 L7.53 0.10 L12.47 0.10 L12.74 2.48 L15.14 3.87 L17.34 2.91 L19.80 7.19 L17.88 8.61 L17.88 11.39 L19.80 12.81 L17.34 17.09 L15.14 16.13 L12.74 17.52 L12.47 19.90 L7.53 19.90 L7.26 17.52 L4.86 16.13 L2.66 17.09 L0.20 12.81 L2.12 11.39 L2.12 8.61 L0.20 7.19 L2.66 2.91 L4.86 3.87 Z M10 6.3 A3.7 3.7 0 1 0 10 13.7 A3.7 3.7 0 1 0 10 6.3 Z"/></svg>
<svg class="abs" style="left:22px;top:224px" width="21" height="20.5" viewBox="0 0 512 512" preserveAspectRatio="none"><path fill="#c3ced6" d="M326.612 185.391c59.747 59.809 58.927 155.698.36 214.59-.11.12-.24.25-.36.37l-67.2 67.2c-59.27 59.27-155.699 59.262-214.96 0-59.27-59.26-59.27-155.7 0-214.96l37.106-37.106c9.84-9.840 26.786-3.3 27.294 10.606.648 17.722 3.826 35.527 9.69 52.721 1.986 5.822.567 12.262-3.783 16.612l-13.087 13.087c-28.026 28.026-28.905 73.66-1.155 101.96 28.024 28.579 74.086 28.749 102.325.51l67.2-67.19c28.191-28.191 28.073-73.757 0-101.83-3.701-3.694-7.429-6.564-10.341-8.569a16.037 16.037 0 0 1-6.947-12.606c-.396-10.567 3.348-21.456 11.698-29.806l21.054-21.055c5.521-5.521 14.182-6.199 20.584-1.731a152.482 152.482 0 0 1 20.522 17.197zM467.547 44.449c-59.261-59.262-155.69-59.27-214.96 0l-67.2 67.2c-.12.12-.25.25-.36.37-58.566 58.892-59.387 154.781.36 214.59a152.454 152.454 0 0 0 20.521 17.196c6.402 4.468 15.064 3.789 20.584-1.731l21.054-21.055c8.35-8.35 12.094-19.239 11.698-29.806a16.037 16.037 0 0 0-6.947-12.606c-2.912-2.005-6.64-4.875-10.341-8.569-28.073-28.073-28.191-73.639 0-101.83l67.2-67.19c28.239-28.239 74.3-28.069 102.325.51 27.75 28.3 26.872 73.934-1.155 101.960l-13.087 13.087c-4.35 4.35-5.769 10.79-3.783 16.612 5.864 17.194 9.042 34.999 9.69 52.721.509 13.906 17.454 20.446 27.294 10.606l37.106-37.106c59.271-59.259 59.271-155.699.001-214.959z"/></svg>
<svg class="abs" style="left:22px;top:279px" width="21" height="21" viewBox="0 0 21 21"><path d="M10.50 0.20 L13.62 6.71 L20.77 7.66 L15.54 12.64 L16.85 19.74 L10.50 16.30 L4.15 19.74 L5.46 12.64 L0.23 7.66 L7.38 6.71 Z" fill="#c3ced6" stroke="#c3ced6" stroke-width="0.6" stroke-linejoin="round"/></svg>
<svg class="abs" style="left:16px;top:328px" width="34" height="32" viewBox="0 0 34 32"><path d="M16.2 21.6 H9.6 a2 2 0 0 1 -2 -2 V9.4 a2 2 0 0 1 2 -2 H25.4 a2 2 0 0 1 2 2 V13.6" fill="none" stroke="#c3ced6" stroke-width="2.7"/><path d="M12.6 12.4 C15 15.5 19 16.8 23.5 16.8 V13.6 L32 20 L23.5 26.3 V23.4 C18 23.6 14.5 19.5 12.6 12.4 Z" fill="#1e252b" stroke="#1e252b" stroke-width="2.2"/><path d="M12.6 12.4 C15 15.5 19 16.8 23.5 16.8 V13.6 L32 20 L23.5 26.3 V23.4 C18 23.6 14.5 19.5 12.6 12.4 Z" fill="#c3ced6"/></svg>
<svg class="abs" style="left:22px;top:391px" width="22" height="17" viewBox="0 0 22 17"><rect x="0.5" y="0.5" width="21" height="15.5" fill="#c3ced6"/><path d="M0.5 0.5 L11 9 L21.5 0.5 M0.5 16 L8 8 M21.5 16 L14 8" stroke="#1e252b" stroke-width="1.1" fill="none"/></svg>
<svg class="abs" style="left:22px;top:443px" width="22" height="22" viewBox="0 0 22 22"><circle cx="10.9" cy="11" r="10.3" fill="#c3ced6"/><path d="M10.7 6.7 V12 L14 15.3" stroke="#1e252b" stroke-width="2.1" fill="none"/></svg>
<svg class="abs" style="left:22px;top:498px" width="22" height="22" viewBox="0 0 22 22"><rect x="1.85" y="1.75" width="19.2" height="19.3" fill="none" stroke="#c3ced6" stroke-width="1.5"/><rect x="3" y="2.5" width="17" height="4.3" fill="#c3ced6"/><rect x="3.1" y="7.8" width="3.7" height="11.3" fill="#c3ced6"/><path d="M8.2 16.4 H13.5 C15 16.4 16 15.4 16 13.9 V9.4" fill="none" stroke="#c3ced6" stroke-width="1.5"/><path d="M13.8 11.2 L16 8.8 L18.2 11.2 M10.2 14.3 L8 16.4 L10.2 18.5" fill="none" stroke="#c3ced6" stroke-width="1.4"/></svg>
<svg class="abs" style="left:22px;top:554px" width="22" height="20" viewBox="0 0 22 20"><rect x="5.1" y="0.9" width="11.15" height="3.1" fill="#c3ced6"/><rect x="0.7" y="5" width="20.4" height="8.7" rx="1" fill="#c3ced6"/><rect x="5.3" y="11.5" width="10.6" height="7.5" fill="#c3ced6"/><rect x="7.5" y="12" width="7.1" height="5.6" fill="#1e252b"/><rect x="18.6" y="6.3" width="1.6" height="1.6" fill="#4a6a8a"/></svg>
<svg class="abs" style="left:22px;top:608px" width="22" height="22" viewBox="0 0 22 22"><circle cx="10.9" cy="11.1" r="9.3" fill="none" stroke="#c3ced6" stroke-width="2"/><path d="M6.8 6.1 H15.9 V10 L12.8 12.8 V14 H9.5 V11.8 L12.6 9 V8.8 H6.8 Z" fill="#c3ced6"/><rect x="9.5" y="15.2" width="3.3" height="2.5" fill="#c3ced6"/></svg>
<div class="abs" style="left:82px;top:830px;width:235px;height:38px;border:1px solid #dcdcdc;background:#f8f8f8;border-radius:4px 0 0 4px"></div>
<div class="abs" style="left:123px;top:830px;width:1px;height:38px;background:#dcdcdc"></div>
<div class="abs" style="left:238px;top:830px;width:1px;height:38px;background:#dcdcdc"></div>
<div class="abs" style="left:275px;top:830px;width:1px;height:38px;background:#dcdcdc"></div>
<div class="abs" style="left:160px;top:830px;width:39px;height:38px;background:#3a8bbf"></div>
<div class="abs" style="left:88px;top:830px;width:30px;height:38px;line-height:38px;text-align:center;font-size:16px;color:#666">«</div>
<div class="abs" style="left:126px;top:830px;width:30px;height:38px;line-height:38px;text-align:center;font-size:16px;color:#666">‹</div>
<div class="abs" style="left:165px;top:830px;width:30px;height:38px;line-height:38px;text-align:center;font-size:16px;color:#fff">1</div>
<div class="abs" style="left:204px;top:830px;width:30px;height:38px;line-height:38px;text-align:center;font-size:16px;color:#666">2</div>
<div class="abs" style="left:242px;top:830px;width:30px;height:38px;line-height:38px;text-align:center;font-size:16px;color:#444">›</div>
<div class="abs" style="left:281px;top:830px;width:30px;height:38px;line-height:38px;text-align:center;font-size:16px;color:#444">»</div>
<div class="abs" style="left:332px;top:830px;width:50px;height:38px;border:1px solid #c9d3dc;border-radius:6px;background:#fff;font-size:16px;line-height:38px;padding-left:11px;color:#333">1</div>
<div class="abs" style="left:386px;top:831px;width:37px;height:37px;background:#3a8bbf;border-radius:3px;color:#fff;font-size:16px;line-height:37px;text-align:center">Go</div>
<div class="abs" style="letter-spacing:-0.191px;left:1316px;top:844px;font-weight:bold;font-size:14.5px;color:#222;white-space:nowrap;line-height:28px">Query Execution: 67 ms</div>
<div class="abs" style="letter-spacing:-0.277px;left:1640px;top:844px;font-weight:bold;font-size:14.5px;color:#222;white-space:nowrap;line-height:28px">Total: 60 Record(s)</div>
<div class="abs" style="left:1778px;top:839px;width:106px;height:37px;border:1px solid #d8d8d8;background:#fff"></div>
<div class="abs" style="letter-spacing:-0.219px;left:1786px;top:839px;height:37px;font-size:14.5px;line-height:38px;color:#333;white-space:nowrap">50 per page</div>
<div class="abs" style="left:68px;top:850px;width:175px;height:50px;background:#fff;border-radius:6px;box-shadow:0 0 6px rgba(0,0,0,0.15)"></div>
<div class="abs" style="left:81px;top:861px;font-size:12.5px;color:#333;white-space:nowrap">We're Online!</div>
<div class="abs" style="left:81px;top:879px;font-size:11px;color:#555;white-space:nowrap">How may I help you today?</div>
<svg class="abs" style="left:0;top:808px" width="62" height="81" viewBox="0 808 62 81">
<path d="M46 861 L58 852 M54 855 L55 850 M54 855 L59 856" stroke="#7a3f1e" stroke-width="1.5" fill="none"/>
<path d="M0 858 L8 862" stroke="#7a3f1e" stroke-width="1.5"/>
<circle cx="25.5" cy="881" r="26" fill="#1467c9"/>
<circle cx="25.5" cy="840" r="15.5" fill="#fafafa" stroke="#d61d1d" stroke-width="1"/>
<path d="M13 827 C13 816 20 811 28 811 C35 811 40 817 42 830 L38 829 C35 822 30 822 25 822 C19 822 15 824 13 827 Z" fill="#d9141b"/>
<ellipse cx="25" cy="826" rx="12.5" ry="4.5" fill="#f2f2f2"/>
<circle cx="43.5" cy="832" r="3.2" fill="#f5f5f5"/>
<circle cx="21" cy="836" r="1" fill="#333"/><circle cx="29" cy="836" r="1" fill="#333"/>
<path d="M23 839 L27 839.5 L23.5 841.5 Z" fill="#f08030"/>
<path d="M18.5 841 Q25 847 32 841.5" stroke="#333" stroke-width="1.1" fill="none"/>
<path d="M10 850 Q25 856 40 850 L40 859 Q25 863 11 859 Z" fill="#e31c23"/>
<path d="M14 851 L15 860 M19 852.5 L20 861 M25 853 L25 861.5 M31 852.5 L30.5 861 M36 851 L35.5 860" stroke="#fff" stroke-width="1.8"/>
<path d="M11 852 L2 866 L7 869 L15 856 Z" fill="#e31c23"/>
<path d="M5 860 L9 862 M3 864 L7 866" stroke="#fff" stroke-width="1.5"/>
<path d="M12 869 a2 2 0 0 1 2 -2 H28 a2 2 0 0 1 2 2 V881 a2 2 0 0 1 -2 2 H18 L13 888 V883 a1 1 0 0 1 -1 -1 Z" fill="#fff"/>
<rect x="21" y="873" width="18.5" height="17" rx="2.5" fill="#fff" stroke="#1467c9" stroke-width="1.3"/>
<circle cx="26.5" cy="880.5" r="0.9" fill="#1467c9"/><circle cx="30" cy="880.5" r="0.9" fill="#1467c9"/><circle cx="33.5" cy="880.5" r="0.9" fill="#1467c9"/>
</svg>
<div class="abs" style="left:62px;top:871px;width:9px;height:9px;background:#fff;transform:rotate(45deg);box-shadow:0 0 4px rgba(255,255,255,0.9)"></div>
</body></html>
